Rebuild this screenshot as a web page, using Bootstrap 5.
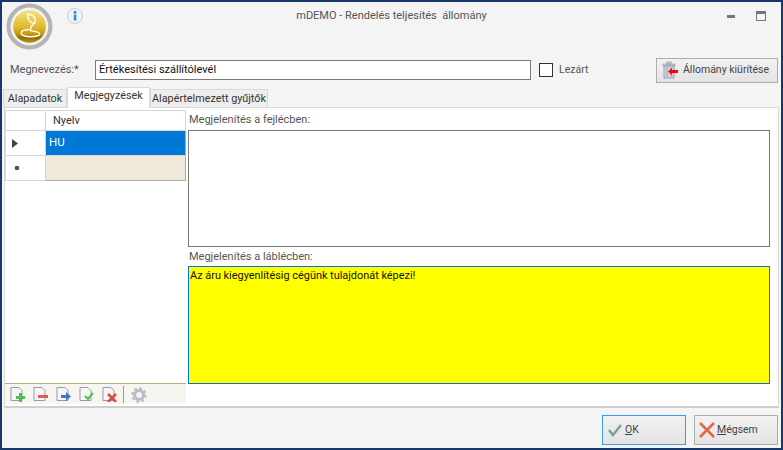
<!DOCTYPE html>
<html lang="hu"><head><meta charset="utf-8"><title>mDEMO</title>
<link href="https://cdn.jsdelivr.net/npm/bootstrap@5.3.0/dist/css/bootstrap.min.css" rel="stylesheet">
<style>
html,body{margin:0;height:450px;overflow:hidden;background:#f4f4f4}
body{font-family:Roboto,"Liberation Sans",sans-serif;font-size:11px;color:#333;line-height:1.2}
.win{width:783px;height:450px;border:2px solid #17386b;background:#f4f4f4;display:flex;flex-direction:column}
.head{height:53px;display:grid;grid-template-columns:150px 1fr 150px;flex:none}
.logo{margin:1px 0 0 4px;width:47px;height:47px}
.info{margin:6px 0 0 14px;width:16px;height:16px}
.wtitle{text-align:center;padding-top:7px;color:#555}
.wbtns{display:flex;justify-content:flex-end;gap:21px;padding:9px 15px 0 0}
.rowname{height:30px;display:flex;align-items:center;flex:none;padding-left:8px}
.lbl{color:#555;width:85px}
.nameinp{width:436px;height:20px;border:1px solid #7a7a7a;background:#fff;padding:2px 3px;color:#111;line-height:14px}
.chk{width:14px;height:14px;border:1px solid #333;background:#fff;margin-left:8px;margin-right:6px}
.lez{color:#555;font-size:10.500px}
.clr{margin-left:auto;margin-right:3px;width:122px;height:25px;border:1px solid #adadad;background:linear-gradient(#f2f2f2,#e3e3e3);display:flex;align-items:center;padding:0 0 0 5px;gap:5px;color:#444;white-space:nowrap;font-size:10.500px}
.tabbar{display:flex;align-items:flex-end;height:20px;margin-top:2px;padding-left:1px;flex:none}
.tabx{height:18px;background:#eee;border:1px solid #d9d9d9;border-bottom:0;padding-top:3px;color:#333;white-space:nowrap;text-align:center;font-size:10.800px}
.tabx.on{background:#fff;height:21px;padding-top:2px;margin-bottom:-1px;position:relative;z-index:1}
.t1{width:64px}.t2{width:83px}.t3{width:118px}
.panel{height:301px;margin:0 2px;background:#fff;border:1px solid #d9d9d9;border-bottom:2px solid #cfcfcf;display:flex;flex:none;padding:2px 8px 0 0}
.left{width:181px;display:flex;flex-direction:column;flex:none;margin-right:2px}
.gr{display:grid;grid-template-columns:40px 1fr;grid-template-rows:20px 25px 25px;border-top:1px solid #d6d6d6;border-left:1px solid #d6d6d6}
.gr>div{border-right:1px solid #d6d6d6;border-bottom:1px solid #d6d6d6;display:flex;align-items:center}
.hcell{padding-left:7px;color:#333}
.gr .sel{background:#0078d7;color:#fff;padding-left:3px;font-size:11.500px;border-right-color:#aaa}
.gr .newc{background:#efe9da;border-right:1px solid #aaa;border-bottom:1px solid #aaa}
.gr .mark1{padding-left:6px}
.gr .mark2{padding-left:8px}
.tool{margin-top:auto;height:21px;background:#f6f5f0;border-top:1px solid #b5ab85;display:flex;align-items:center;padding:1px 0 0 5px;gap:8px;margin-bottom:2px;flex:none}
.tsep{width:1px;height:17px;background:#999;margin:0 -1px 0 -2px}
.right{flex:1;min-width:0;display:flex;flex-direction:column}
.cap{color:#555;height:20px;padding:3px 0 0 1px;flex:none}
.ta1{height:117px;border:1px solid #7a7a7a;background:#fff;flex:none}
.ta2{height:118px;border:1px solid #0078d7;background:#ff0;padding:2px 1px;color:#111;flex:none;font-size:10.900px}
.cap2{margin-top:3px;height:16px;padding-top:0}
.foot{flex:1;display:flex;justify-content:flex-end;align-items:center;gap:8px;padding:4px 3px 0 0}
.bb{height:30px;width:84px;background:linear-gradient(#f2f2f2,#e4e4e4);border:1px solid #adadad;display:flex;align-items:center;padding:0 3px;gap:1px;color:#444;font-size:10.500px}
.bb.def{border-color:#3b9bee}
</style></head><body>
<div class="win">
 <div class="head">
  <div class="d-flex">
   <svg class="logo" viewBox="0 0 46 46"><defs><linearGradient id="g" x1="0" y1="0" x2="0" y2="1"><stop offset="0" stop-color="#f4e286"/><stop offset=".5" stop-color="#e2bc30"/><stop offset=".72" stop-color="#c89c10"/><stop offset=".85" stop-color="#8f6a08"/><stop offset="1" stop-color="#c2960e"/></linearGradient></defs><circle cx="23" cy="23" r="20.500" fill="#f2f2f2" stroke="#b4b4b4" stroke-width="4"/><circle cx="23" cy="23" r="16" fill="url(#g)"/><path d="M21 11c6 0 9 4 7 9-4 0-7-4-7-9zM27 20c-2 3-4 4-3 7 4 1 9 1 9 3s-5 3-9 3-8-1-9-3m0 0c-1-3 4-4 8-4" fill="none" stroke="#fff" stroke-width="1.300"/></svg>
   <svg class="info" viewBox="0 0 16 16"><circle cx="8" cy="8" r="7.500" fill="#f0f3f7" stroke="#c8ccd2"/><rect x="6.800" y="6.500" width="2.600" height="6" fill="#2a8fd6"/><circle cx="8" cy="4.300" r="1.500" fill="#2a8fd6"/></svg>
  </div>
  <div class="wtitle">mDEMO - Rendelés teljesítés&nbsp; állomány</div>
  <div class="wbtns">
   <svg width="8" height="3" viewBox="0 0 8 3" class="mt-1"><rect width="8" height="3" fill="#777"/></svg>
   <svg width="10" height="10" viewBox="0 0 10 10"><rect x=".5" y=".5" width="9" height="9" fill="none" stroke="#777"/><rect width="10" height="3" fill="#777"/></svg>
  </div>
 </div>
 <div class="rowname">
  <div class="lbl">Megnevezés:*</div>
  <div class="nameinp">Értékesítési szállítólevél</div>
  <div class="chk"></div><div class="lez">Lezárt</div>
  <div class="clr"><svg width="16" height="18" viewBox="0 0 16 18"><rect x="1" y="3" width="12" height="2" fill="#bcc2cf" stroke="#9aa0ae" stroke-width=".6"/><rect x="5" y="1" width="4" height="2" fill="none" stroke="#9aa0ae"/><rect x="2" y="5" width="10" height="12" fill="#cdd2dc" stroke="#9aa0ae"/><path d="M5 6v10M9 6v10" stroke="#9aa0ae"/><path d="M6 10.500l4-3.500v2h6v3h-6v2z" fill="#f00"/></svg><span>Állomány kiürítése</span></div>
 </div>
 <div class="tabbar">
  <div class="tabx t1">Alapadatok</div><div class="tabx on t2">Megjegyzések</div><div class="tabx t3">Alapértelmezett gyűjtők</div>
 </div>
 <div class="panel">
  <div class="left">
   <div class="gr">
    <div></div><div class="hcell">Nyelv</div>
    <div class="mark1"><svg width="6" height="9" viewBox="0 0 6 9"><path d="M0 0l6 4.500L0 9z" fill="#444"/></svg></div><div class="sel">HU</div>
    <div class="mark2"><svg width="6" height="6" viewBox="0 0 6 6"><circle cx="3" cy="3" r="2.300" fill="#555"/></svg></div><div class="newc"></div>
   </div>
   <div class="tool">
    <svg width="15" height="15" viewBox="0 0 15 15"><path d="M1 .5h8l3 3v10H1z" fill="#f6f6f8" stroke="#9a9aa2"/><path d="M6 9h3V6h3v3h3v3h-3v3H9v-3H6z" fill="#4dc04d"/></svg>
    <svg width="15" height="15" viewBox="0 0 15 15"><path d="M1 .5h8l3 3v10H1z" fill="#f6f6f8" stroke="#9a9aa2"/><rect x="5" y="8" width="10" height="3" fill="#e05a5a"/></svg>
    <svg width="15" height="15" viewBox="0 0 15 15"><path d="M1 .5h8l3 3v10H1z" fill="#f6f6f8" stroke="#9a9aa2"/><path d="M5 8h5V5l5 4.500-5 4.500v-3H5z" fill="#3f78cc"/></svg>
    <svg width="15" height="15" viewBox="0 0 15 15"><path d="M1 .5h8l3 3v10H1z" fill="#f6f6f8" stroke="#9a9aa2"/><path d="M6 9l3 3 5-6" fill="none" stroke="#4dc04d" stroke-width="2"/></svg>
    <svg width="15" height="15" viewBox="0 0 15 15"><path d="M1 .5h8l3 3v10H1z" fill="#f6f6f8" stroke="#9a9aa2"/><path d="M6 7l8 8M14 7l-8 8" stroke="#d94a4a" stroke-width="2.600"/></svg>
    <div class="tsep"></div>
    <svg width="16" height="16" viewBox="0 0 16 16"><circle cx="8" cy="8" r="4.500" fill="none" stroke="#b7bdcb" stroke-width="3"/><circle cx="8" cy="8" r="6.600" fill="none" stroke="#b7bdcb" stroke-width="2.400" stroke-dasharray="2.600 2.600"/></svg>
   </div>
  </div>
  <div class="right">
   <div class="cap">Megjelenítés a fejlécben:</div>
   <div class="ta1"></div>
   <div class="cap cap2">Megjelenítés a láblécben:</div>
   <div class="ta2">Az áru kiegyenlítésig cégünk tulajdonát képezi!</div>
  </div>
 </div>
 <div class="foot">
  <div class="bb def"><svg width="18" height="14" viewBox="0 0 18 14"><path d="M3 7l4 5 8-10" fill="none" stroke="#6fa898" stroke-width="2.500"/></svg><span><u>O</u>K</span></div>
  <div class="bb"><svg width="18" height="18" viewBox="0 0 18 18"><path d="M2 2l14 14M16 2L2 16" stroke="#e0674a" stroke-width="2.600"/></svg><span><u>M</u>égsem</span></div>
 </div>
</div>
</body></html>
